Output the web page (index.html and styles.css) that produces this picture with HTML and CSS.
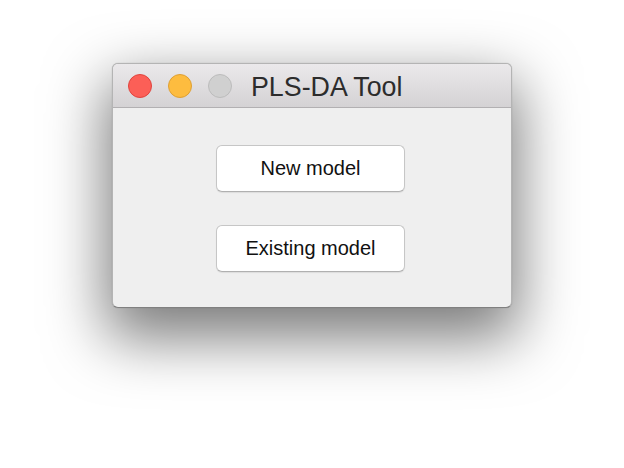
FILE: index.html
```
<!DOCTYPE html>
<html>
<head>
<meta charset="utf-8">
<link rel="stylesheet" href="styles.css">
</head>
<body>
<div class="window">
  <div class="titlebar">
    <span class="light red"></span>
    <span class="light yellow"></span>
    <span class="light gray"></span>
    <span class="title">PLS-DA Tool</span>
  </div>
  <div class="content">
    <button class="btn">New model</button>
    <button class="btn">Existing model</button>
  </div>
</div>
</body>
</html>
```
FILE: styles.css
```
html, body { margin: 0; padding: 0; background: #ffffff; }
body { width: 624px; height: 468px; overflow: hidden; padding-top: 63px; box-sizing: border-box; font-family: "Liberation Sans", Arial, sans-serif; }
.window {
  width: 400px;
  height: 245px;
  margin: 0 auto;
  box-sizing: border-box;
  border: 1px solid #b4b4b4;
  border-bottom-color: #808080;
  border-radius: 6px;
  background: #efefef;
  box-shadow: 0 24px 60px 6px rgba(0,0,0,0.52), 0 0 1px rgba(0,0,0,0.3);
  overflow: hidden;
  display: flex;
  flex-direction: column;
}
.titlebar {
  height: 42px;
  flex: none;
  background: linear-gradient(#ebe9eb, #d4d2d4);
  border-bottom: 1px solid #b2b0b2;
  display: flex;
  align-items: center;
  padding-left: 15px;
  padding-top: 1px;
  box-sizing: content-box;
}
.light { width: 22px; height: 22px; border-radius: 50%; border: 1px solid; margin-right: 16px; flex: none; }
.red { background: #fc5f57; border-color: #e0443e; }
.yellow { background: #fdbc3f; border-color: #dea034; }
.gray { background: #d0d0d0; border-color: #bcbcbc; margin-right: 19px; }
.title { font-size: 26.8px; color: #2c2c2c; line-height: 1; margin-top: 2px; }
.content {
  flex: 1;
  display: flex;
  flex-direction: column;
  align-items: center;
  padding-top: 37px;
  gap: 33px;
}
.btn {
  width: 189px;
  height: 47px;
  background: #ffffff;
  border: 1px solid #c6c6c6;
  border-bottom-color: #b0b0b0;
  border-radius: 6px;
  box-shadow: 0 1px 1px rgba(0,0,0,0.08);
  font-family: "Liberation Sans", Arial, sans-serif;
  font-size: 20px;
  color: #111111;
  padding: 0;
  margin-right: 3px;
}
```
